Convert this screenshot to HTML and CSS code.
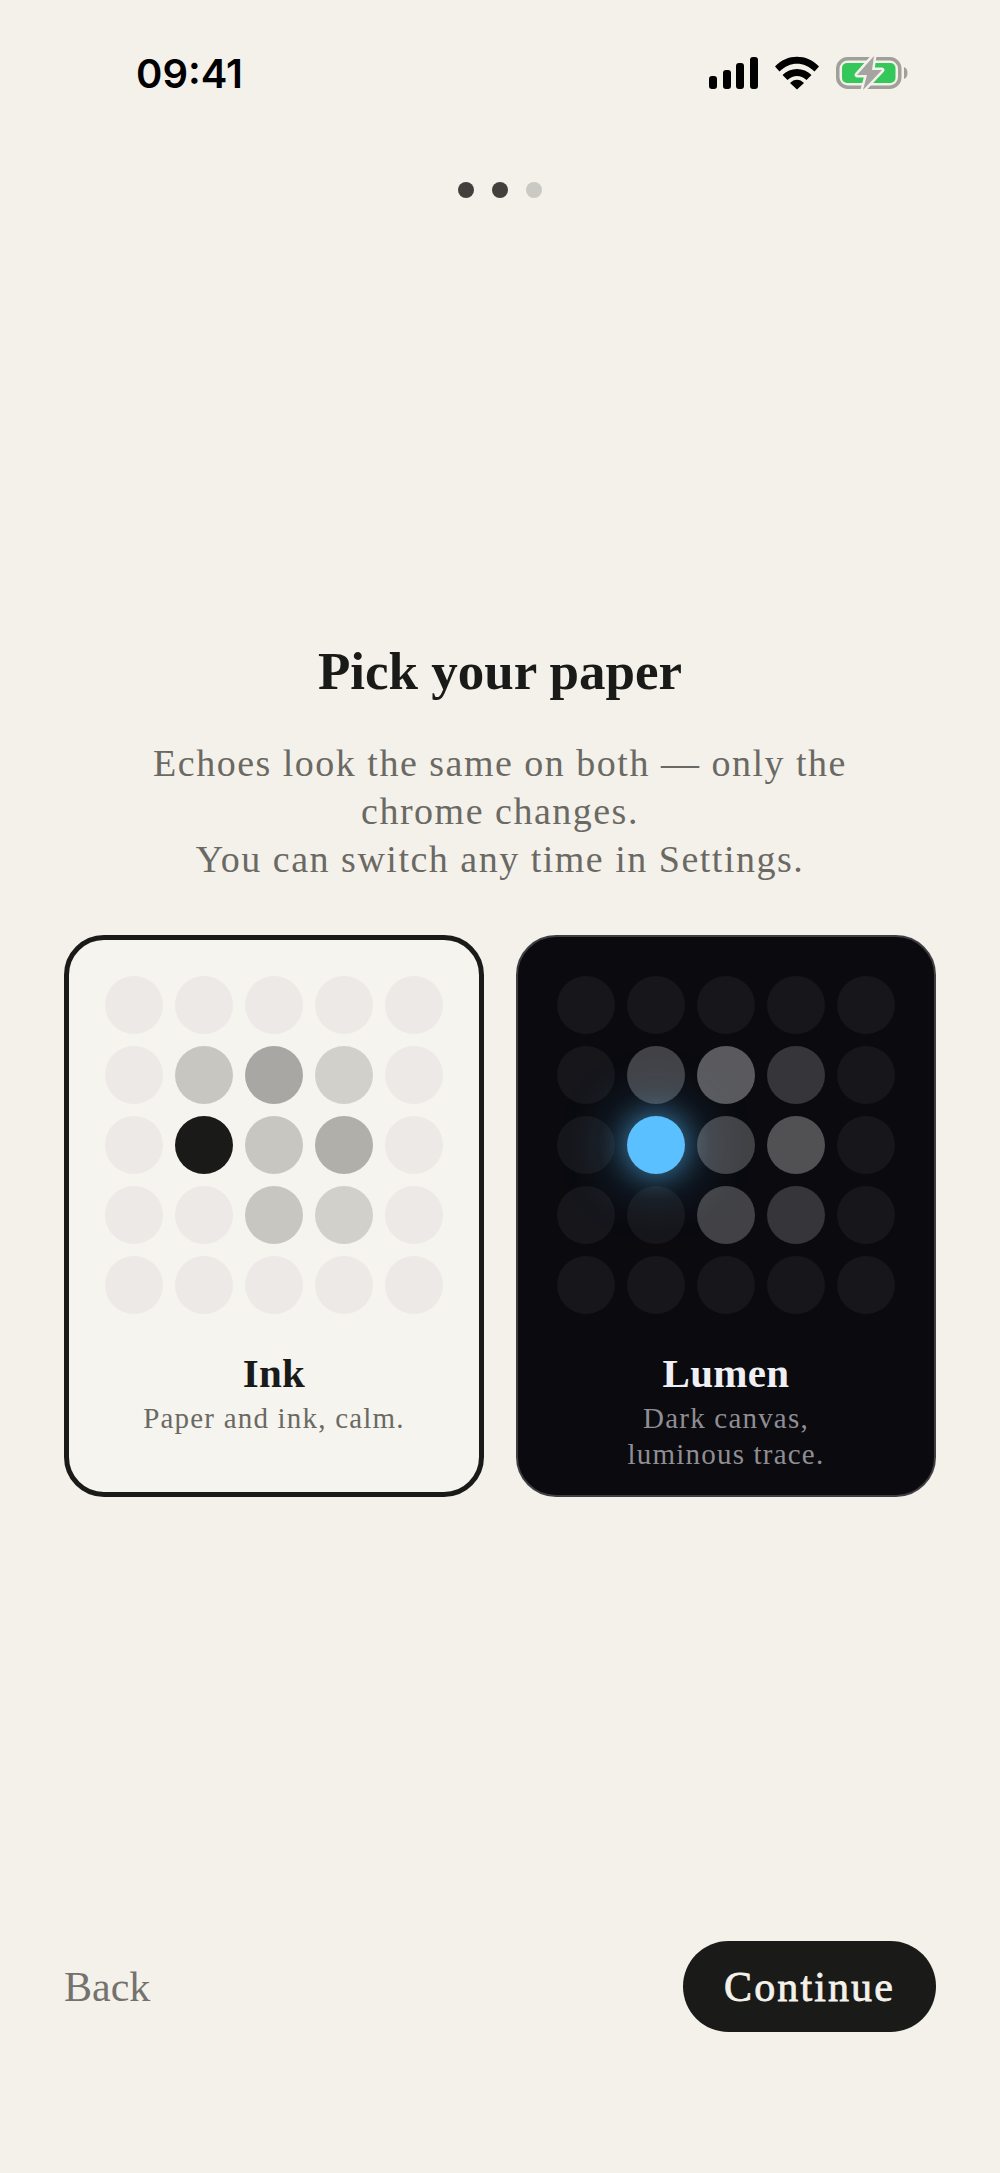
FILE: index.html
```
<!DOCTYPE html>
<html lang="en">
<head>
<meta charset="utf-8">
<title>Pick your paper</title>
<link rel="stylesheet" href="styles.css">
</head>
<body>
<div class="screen">
  <header class="status">
    <span class="time">09:41</span>
    <div class="status-icons">
      <svg class="signal" viewBox="0 0 49 32" aria-hidden="true">
        <rect x="0" y="19" width="8" height="13" rx="3"/>
        <rect x="14" y="13" width="8" height="19" rx="3"/>
        <rect x="27" y="6" width="8" height="26" rx="3"/>
        <rect x="41" y="0" width="8" height="32" rx="3"/>
      </svg>
      <svg class="wifi" viewBox="0 0 44 32" aria-hidden="true">
        <path d="M0 9.500 C12 -3.500 32 -3.500 44 9.500 L39.500 14.500 C29 4 15 4 4.500 14.500 Z"/>
        <path d="M7.500 18 C15 10 29 10 36.500 18 L31.500 23 C25.500 17.500 18.500 17.500 12.500 23 Z"/>
        <path d="M15 26 C19 21.500 25 21.500 29 26 L22 32.500 Z"/>
      </svg>
      <svg class="battery" viewBox="0 0 72 32" aria-hidden="true">
        <rect x="1.750" y="1.750" width="62" height="28.500" rx="10" fill="none" stroke="#a09f9a" stroke-width="3.500"/>
        <rect x="6" y="6" width="53.500" height="20" rx="5" fill="#34c759"/>
        <path d="M68 10 C70.500 11 71.500 13 71.500 16 C71.500 19 70.500 21 68 22 Z" fill="#a09f9a"/>
        <path class="bolt" d="M38 -1 L21 18 L31 18 L27 33 L46 13 L36 13 Z"/>
      </svg>
    </div>
  </header>

  <div class="pager">
    <span class="pip"></span>
    <span class="pip"></span>
    <span class="pip pip-off"></span>
  </div>

  <main class="content">
    <h1 class="title">Pick your paper</h1>
    <p class="lede">Echoes look the same on both — only the<br>chrome changes.<br>You can switch any time in Settings.</p>

    <div class="cards">
      <section class="card card-ink">
        <div class="dots">
          <i class="d"></i><i class="d"></i><i class="d"></i><i class="d"></i><i class="d"></i>
          <i class="d"></i><i class="d l3"></i><i class="d l5"></i><i class="d l2"></i><i class="d"></i>
          <i class="d"></i><i class="d on"></i><i class="d l3"></i><i class="d l4"></i><i class="d"></i>
          <i class="d"></i><i class="d"></i><i class="d l3"></i><i class="d l2"></i><i class="d"></i>
          <i class="d"></i><i class="d"></i><i class="d"></i><i class="d"></i><i class="d"></i>
        </div>
        <h2 class="name">Ink</h2>
        <p class="desc">Paper and ink, calm.</p>
      </section>

      <section class="card card-lumen">
        <div class="dots">
          <i class="d"></i><i class="d"></i><i class="d"></i><i class="d"></i><i class="d"></i>
          <i class="d"></i><i class="d l3"></i><i class="d l5"></i><i class="d l2"></i><i class="d"></i>
          <i class="d"></i><i class="d on"></i><i class="d l3"></i><i class="d l4"></i><i class="d"></i>
          <i class="d"></i><i class="d"></i><i class="d l3"></i><i class="d l2"></i><i class="d"></i>
          <i class="d"></i><i class="d"></i><i class="d"></i><i class="d"></i><i class="d"></i>
        </div>
        <h2 class="name">Lumen</h2>
        <p class="desc">Dark canvas,<br>luminous trace.</p>
      </section>
    </div>
  </main>

  <footer class="actions">
    <a class="back">Back</a>
    <button class="continue" type="button">Continue</button>
  </footer>
</div>
</body>
</html>
```
FILE: styles.css
```
* { box-sizing: border-box; }
html, body { margin: 0; padding: 0; }
body {
  background: #f4f1eb;
  color: #1a1a18;
  font-family: "Liberation Serif", serif;
}
.screen {
  width: 1000px;
  height: 2173px;
  display: flex;
  flex-direction: column;
}
.status {
  display: flex;
  justify-content: space-between;
  align-items: center;
  height: 32px;
  margin-top: 57px;
  padding: 0 92px 0 136px;
}
.time {
  position: relative;
  top: 1px;
  font-family: Inter, sans-serif;
  font-weight: 600;
  font-size: 40px;
  line-height: 32px;
  color: #000;
}
.status-icons { display: flex; align-items: center; gap: 17px; }
.signal { width: 49px; height: 32px; fill: #000; }
.wifi { width: 44px; height: 32px; fill: #000; overflow: visible; }
.battery { width: 72px; height: 32px; overflow: visible; }
.bolt {
  fill: #a5a4a0;
  stroke: #f4f1eb;
  stroke-width: 5;
  stroke-linejoin: round;
  paint-order: stroke;
}

.pager {
  display: flex;
  justify-content: center;
  gap: 18px;
  margin-top: 93px;
}
.pip { width: 16px; height: 16px; border-radius: 50%; background: #42403c; }
.pip-off { background: #cbc9c4; }

.content {
  padding: 0 64px;
  margin-top: 443px;
  text-align: center;
}
.title {
  margin: 0;
  font-size: 53px;
  font-weight: 700;
  line-height: 60px;
  color: #1a1a18;
}
.lede {
  margin: 38px 0 0;
  font-size: 38px;
  line-height: 48px;
  letter-spacing: 1.500px;
  color: #6b6963;
}
.cards {
  display: grid;
  grid-template-columns: 1fr 1fr;
  gap: 32px;
  margin-top: 52px;
  text-align: center;
}
.card {
  height: 562px;
  border-radius: 40px;
  padding-top: 36px;
}
.card-ink { background: #f6f4ef; border: 5px solid #1a1a18; }
.card-lumen {
  background: #0a0a0f;
  border: 2px solid #3f3f43;
  padding-top: 39px;
}
.dots {
  display: grid;
  grid-template-columns: repeat(5, 58px);
  grid-auto-rows: 58px;
  gap: 12px;
  justify-content: center;
}
.d { display: block; border-radius: 50%; }
.card-ink .d { background: #ece9e6; }
.card-ink .l2 { background: #d2d0cb; }
.card-ink .l3 { background: #c8c6c1; }
.card-ink .l4 { background: #b0afaa; }
.card-ink .l5 { background: #a9a7a3; }
.card-ink .on { background: #1a1a18; }
.card-lumen .d { background: rgba(255,255,255,.05); }
.card-lumen .l2 { background: rgba(255,255,255,.18); }
.card-lumen .l3 { background: rgba(255,255,255,.23); }
.card-lumen .l4 { background: rgba(255,255,255,.29); }
.card-lumen .l5 { background: rgba(255,255,255,.33); }
.card-lumen .on {
  background: #5ac0ff;
  box-shadow: 0 0 24px 4px rgba(90,192,255,.4), 0 0 60px 10px rgba(90,192,255,.32);
}

.name {
  margin: 35px 0 0;
  font-size: 41px;
  font-weight: 700;
  line-height: 48px;
  letter-spacing: .3px;
}
.desc {
  margin: 3px 0 0;
  font-size: 29px;
  line-height: 36px;
  letter-spacing: 1.200px;
  color: #6b6963;
}
.card-lumen .name { color: #efeff4; }
.card-lumen .desc { color: #8f8e94; }

.actions {
  display: flex;
  justify-content: space-between;
  align-items: center;
  padding: 0 64px;
  margin-top: auto;
  margin-bottom: 141px;
}
.back { font-size: 42px; line-height: 48px; color: #74726c; }
.continue {
  width: 253px;
  height: 91px;
  border: 0;
  border-radius: 46px;
  background: #1a1a18;
  color: #f4f1eb;
  font-family: "Liberation Serif", serif;
  font-size: 42px;
  font-weight: 400;
  letter-spacing: 2.100px;
  -webkit-text-stroke: .8px #f4f1eb;
}
```
